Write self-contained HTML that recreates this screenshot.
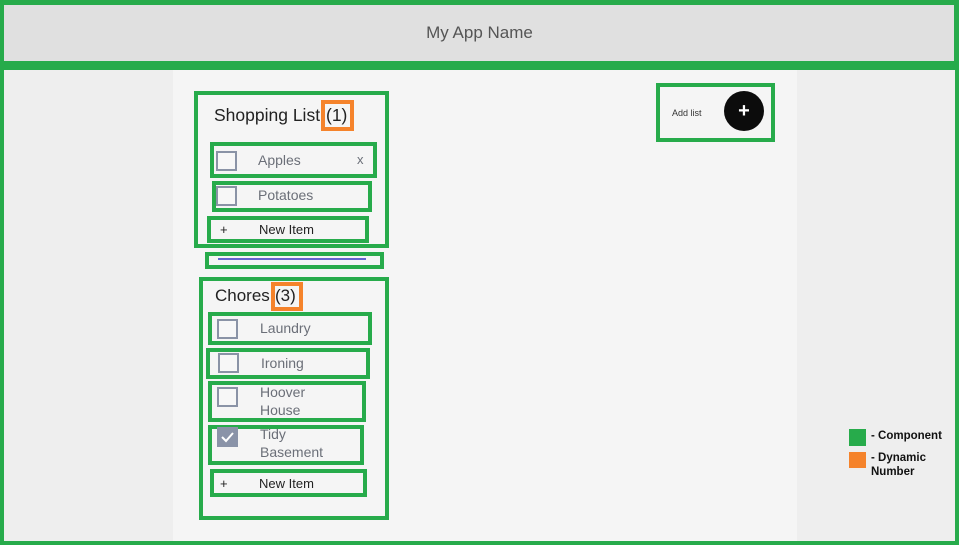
<!DOCTYPE html>
<html><head><style>
*{margin:0;padding:0;box-sizing:border-box}
body{width:959px;height:545px;position:relative;background:#eeeeee;font-family:"Liberation Sans",sans-serif;overflow:hidden}
.a{position:absolute}
.g{position:absolute;border:4px solid #27ab4b}
.o{position:absolute;border:4px solid #f5832b}
.cb{position:absolute;width:21px;height:20px;border:2px solid #8a93a6;background:#f7f7f7}
.t{position:absolute;color:#6b6f78;font-size:14px}
.n{position:absolute;color:#222;font-size:13px}
</style></head><body>
<div class="a" style="left:0;top:0;width:959px;height:66px;background:#e0e0e0;border:5px solid #27ab4b;border-left-width:4px"></div>
<div class="a" style="left:0;top:0;width:959px;height:66px;line-height:66px;text-align:center;color:#555;font-size:17px">My App Name</div>
<div class="a" style="left:0;top:65px;width:959px;height:480px;border:5px solid #27ab4b;border-left-width:4px;border-bottom-width:4px;border-right-width:4px"></div>
<div class="a" style="left:173px;top:70px;width:624px;height:471px;background:#f5f5f5"></div>

<div class="g" style="left:194px;top:91px;width:195px;height:157px"></div>
<div class="a" style="left:214px;top:105px;font-size:17.5px;color:#222">Shopping List <span style="position:absolute;left:112px">(1)</span></div>
<div class="o" style="left:321px;top:100px;width:33px;height:31px"></div>
<div class="g" style="left:210px;top:142px;width:167px;height:36px"></div>
<div class="cb" style="left:216px;top:151px"></div>
<div class="t" style="left:258px;top:152px">Apples</div>
<div class="t" style="left:357px;top:152px;font-size:13px">x</div>
<div class="g" style="left:212px;top:181px;width:160px;height:31px"></div>
<div class="cb" style="left:216px;top:186px"></div>
<div class="t" style="left:258px;top:187px">Potatoes</div>
<div class="g" style="left:207px;top:216px;width:162px;height:27px"></div>
<div class="n" style="left:220px;top:222px">+</div>
<div class="n" style="left:259px;top:222px">New Item</div>
<div class="g" style="left:205px;top:252px;width:179px;height:17px"></div>
<div class="a" style="left:218px;top:258px;width:148px;height:2px;background:#6464d0"></div>

<div class="g" style="left:199px;top:277px;width:190px;height:243px"></div>
<div class="a" style="left:215px;top:286px;font-size:17px;color:#222">Chores <span style="position:absolute;left:60px">(3)</span></div>
<div class="o" style="left:271px;top:282px;width:32px;height:29px"></div>
<div class="g" style="left:208px;top:312px;width:164px;height:33px"></div>
<div class="cb" style="left:217px;top:319px"></div>
<div class="t" style="left:260px;top:320px">Laundry</div>
<div class="g" style="left:206px;top:348px;width:164px;height:31px"></div>
<div class="cb" style="left:218px;top:353px"></div>
<div class="t" style="left:261px;top:355px">Ironing</div>
<div class="g" style="left:208px;top:381px;width:158px;height:41px"></div>
<div class="cb" style="left:217px;top:387px"></div>
<div class="t" style="left:260px;top:383px;line-height:18px">Hoover<br>House</div>
<div class="g" style="left:208px;top:425px;width:156px;height:40px"></div>
<div class="cb" style="left:217px;top:427px;background:#8a93a8;border-color:#8a93a8"><svg width="17" height="16" style="position:absolute;left:0;top:0"><path d="M3 8 L7 12 L14 4" stroke="#fff" stroke-width="2" fill="none"/></svg></div>
<div class="t" style="left:260px;top:425px;line-height:18px">Tidy<br>Basement</div>
<div class="g" style="left:210px;top:469px;width:157px;height:28px"></div>
<div class="n" style="left:220px;top:476px">+</div>
<div class="n" style="left:259px;top:476px">New Item</div>

<div class="g" style="left:656px;top:83px;width:119px;height:59px"></div>
<div class="a" style="left:672px;top:108px;font-size:9px;color:#333">Add list</div>
<div class="a" style="left:724px;top:91px;width:40px;height:40px;border-radius:50%;background:#0c0c0c;color:#fff;text-align:center;line-height:40px;font-size:20px;font-weight:bold">+</div>

<div class="a" style="left:849px;top:429px;width:17px;height:17px;background:#27ab4b"></div>
<div class="a" style="left:871px;top:430px;font-size:11.5px;font-weight:bold;color:#111">- Component</div>
<div class="a" style="left:849px;top:452px;width:17px;height:16px;background:#f5832b"></div>
<div class="a" style="left:871px;top:451px;font-size:11.5px;font-weight:bold;color:#111;line-height:14px">- Dynamic<br>Number</div>
</body></html>
